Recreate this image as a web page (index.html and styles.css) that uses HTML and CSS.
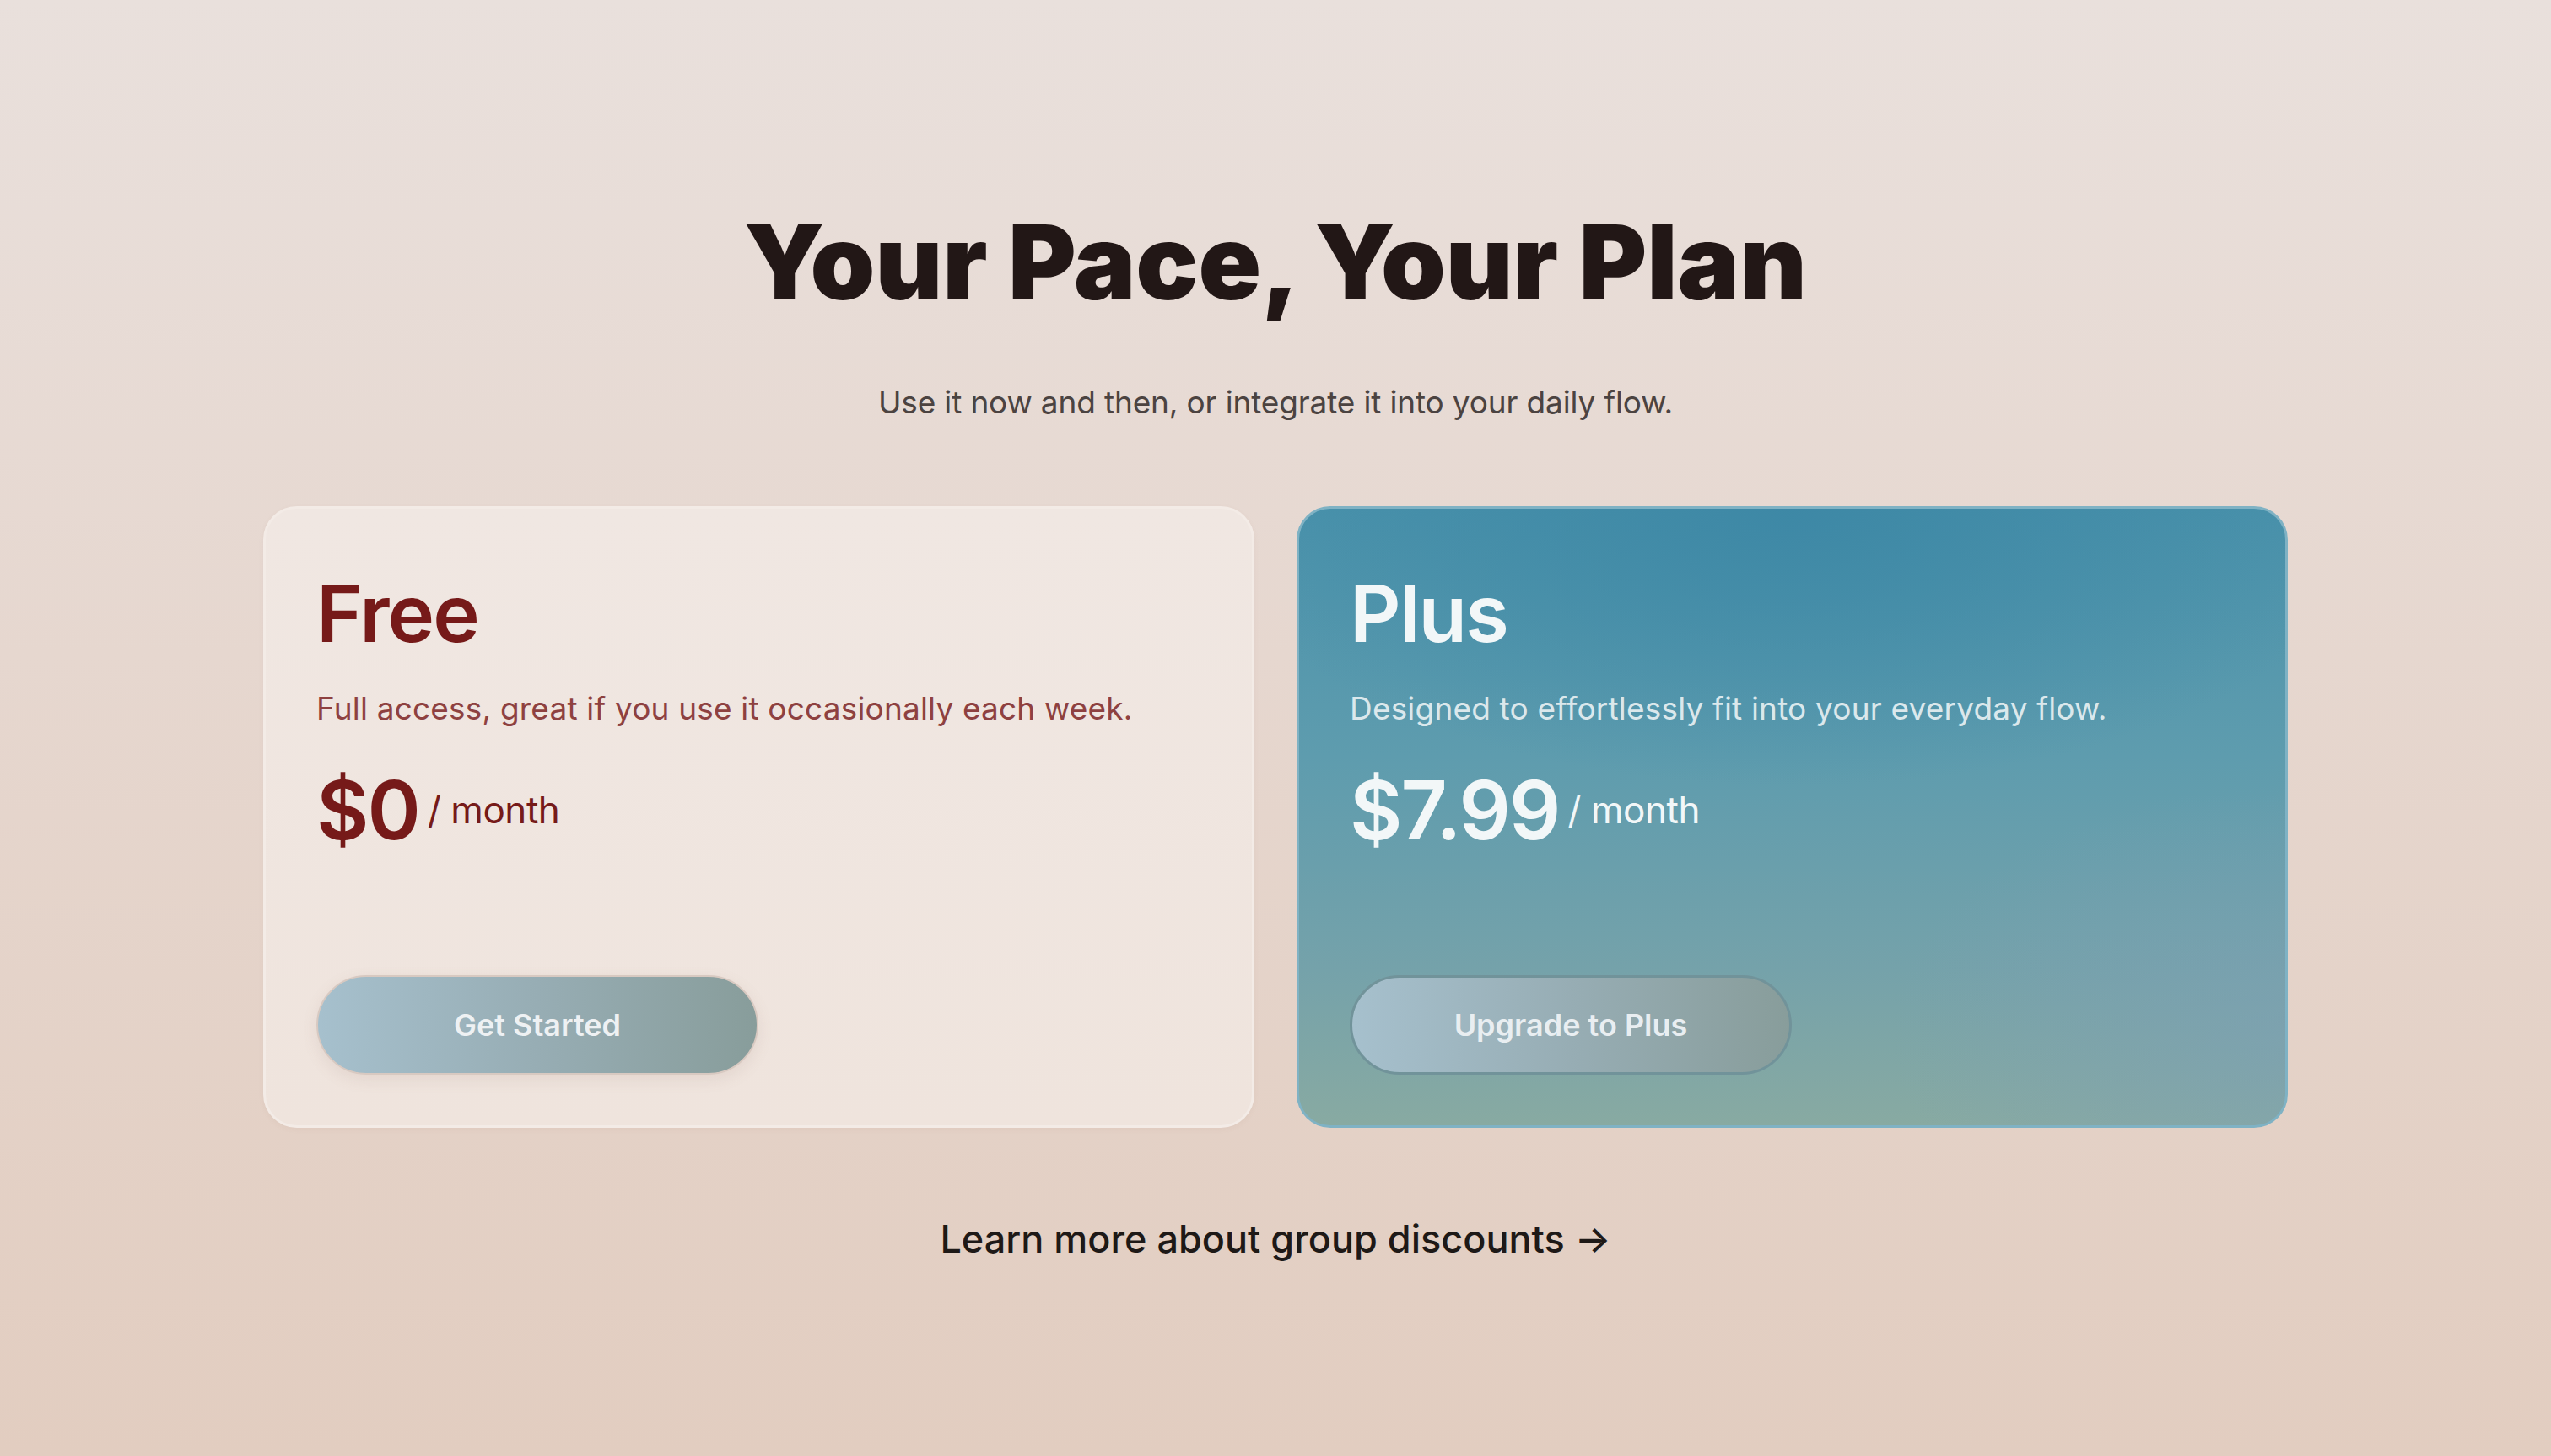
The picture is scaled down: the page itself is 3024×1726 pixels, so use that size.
FILE: index.html
```html
<!DOCTYPE html>
<html lang="en">
<head>
<meta charset="utf-8">
<title>Pricing</title>
<link rel="stylesheet" href="styles.css">
</head>
<body>
<main class="page">
  <header class="hero">
    <h1 class="hero-title">Your Pace, Your Plan</h1>
    <p class="hero-sub">Use it now and then, or integrate it into your daily flow.</p>
  </header>
  <section class="plans">
    <article class="plan plan-free">
      <h2 class="plan-name">Free</h2>
      <p class="plan-desc">Full access, great if you use it occasionally each week.</p>
      <div class="plan-price"><span class="amount">$0</span><span class="per">/ month</span></div>
      <button class="plan-btn">Get Started</button>
    </article>
    <article class="plan plan-plus">
      <h2 class="plan-name">Plus</h2>
      <p class="plan-desc">Designed to effortlessly fit into your everyday flow.</p>
      <div class="plan-price"><span class="amount">$7.99</span><span class="per">/ month</span></div>
      <button class="plan-btn">Upgrade to Plus</button>
    </article>
  </section>
  <a class="group-link" href="#">Learn more about group discounts →</a>
</main>
</body>
</html>
```
FILE: styles.css
```css
* { box-sizing: border-box; }
html, body { margin: 0; height: 100%; }
body {
  font-family: Inter, "Noto Sans", sans-serif;
  background: linear-gradient(180deg, #e9e0dc 0%, #e6d7cf 45%, #e2cdc0 100%);
  min-height: 1726px;
}
.page {
  display: flex;
  flex-direction: column;
  align-items: center;
  padding-top: 238px;
}
.hero { text-align: center; }
.hero-title {
  margin: 0;
  font-size: 123px;
  line-height: 146px;
  font-weight: 900;
  letter-spacing: 0;
  color: #221716;
}
.hero-sub {
  margin: 65px 0 0;
  font-size: 37px;
  line-height: 55px;
  color: #4b4341;
  letter-spacing: -0.004em;
}
.plans {
  margin-top: 96px;
  width: 2400px;
  display: grid;
  grid-template-columns: 1fr 1fr;
  gap: 50px;
}
.plan {
  min-height: 737px;
  border-radius: 40px;
  padding: 68px 60px 60px;
  display: flex;
  flex-direction: column;
  align-items: flex-start;
}
.plan-free {
  background: linear-gradient(180deg, #f0e7e2 0%, #efe4dd 100%);
  border: 3px solid #f3ebe6;
  box-shadow: 0 2px 6px rgba(150, 110, 90, 0.06);
}
.plan-plus {
  background:
    radial-gradient(ellipse 60% 45% at 50% 0%, rgba(60, 135, 165, 0.9), rgba(60, 135, 165, 0) 100%),
    radial-gradient(ellipse 40% 40% at 100% 85%, rgba(125, 160, 180, 0.6), rgba(125, 160, 180, 0) 100%),
    linear-gradient(180deg, #4a92ab 0%, #5e9cae 40%, #75a2aa 75%, #88aaa2 100%);
  border: 3px solid #7fb2c4;
}
.plan-name {
  margin: 0;
  font-size: 94px;
  line-height: 113px;
  font-weight: 600;
  letter-spacing: -0.02em;
}
.plan-desc {
  margin: 28px 0 0;
  font-size: 37px;
  line-height: 55px;
  letter-spacing: 0.005em;
}
.plan-price {
  margin-top: 45px;
  display: flex;
  align-items: center;
  gap: 10px;
}
.amount {
  font-size: 96px;
  line-height: 96px;
  font-weight: 600;
  letter-spacing: -0.02em;
}
.per {
  font-size: 44px;
  line-height: 53px;
  letter-spacing: -0.01em;
}
.plan-free .plan-name, .plan-free .amount, .plan-free .per { color: #761a19; }
.plan-free .plan-desc { color: #8e4140; }
.plan-plus .plan-name, .plan-plus .amount, .plan-plus .per { color: #f2f7f8; }
.plan-plus .plan-desc { color: #dbe8ec; }
.plan-btn {
  margin-top: auto;
  width: 524px;
  height: 118px;
  border-radius: 60px;
  font-family: inherit;
  font-size: 36px;
  font-weight: 600;
  color: #eef1f3;
  background: linear-gradient(90deg, #a6c0cd 0%, #97adb4 50%, #889d9b 100%);
  cursor: pointer;
}
.plan-free .plan-btn {
  border: 2px solid #d8c9c1;
  box-shadow: 0 6px 18px rgba(140, 110, 95, 0.12);
}
.plan-plus .plan-btn {
  border: 3px solid #71939a;
  color: #e9eef1;
}
.group-link {
  margin-top: 98px;
  font-size: 45px;
  line-height: 67px;
  font-weight: 500;
  color: #1e1917;
  text-decoration: none;
  letter-spacing: 0;
}
```
